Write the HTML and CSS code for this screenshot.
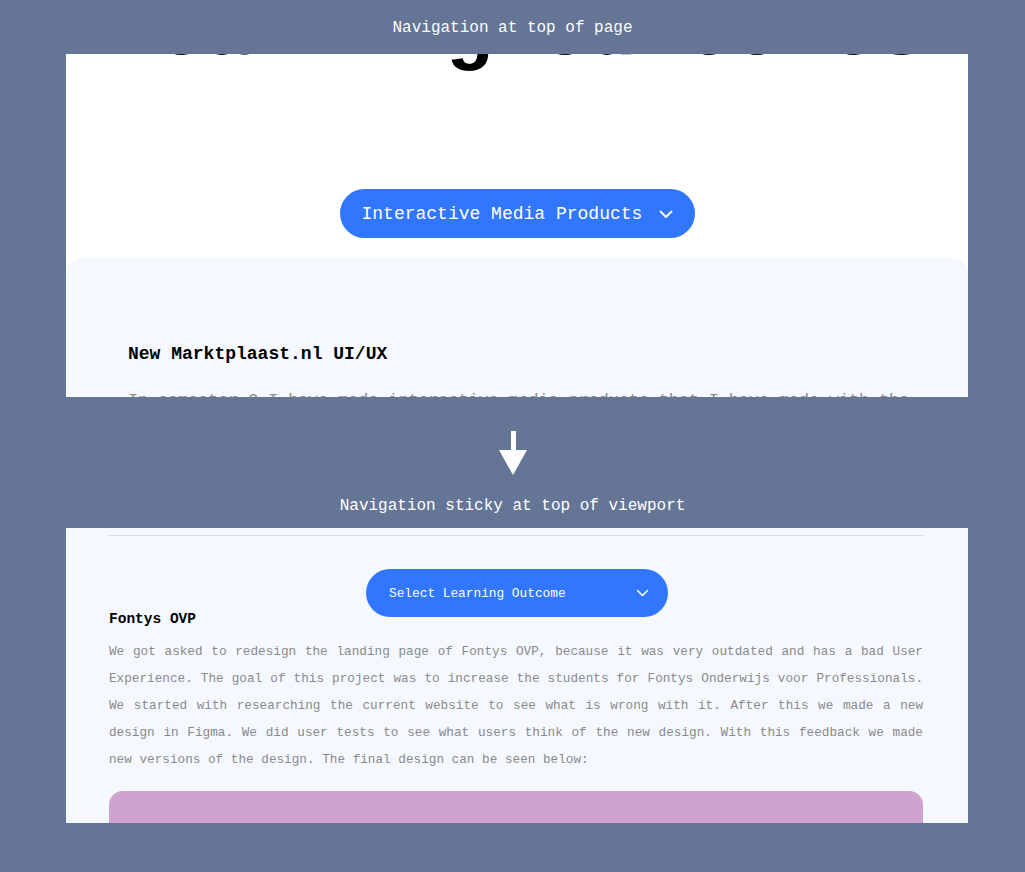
FILE: index.html
```html
<!DOCTYPE html>
<html lang="en">
<head>
<meta charset="utf-8">
<title>Sticky navigation</title>
<link rel="stylesheet" href="styles.css">
</head>
<body>
  <p class="caption caption-top">Navigation at top of page</p>

  <div class="frame frame-top">
    <h1 class="hero-title">Learning Outcomes</h1>
    <button class="pill pill-large" type="button">
      <span>Interactive Media Products</span>
      <svg class="chev" width="14" height="9" viewBox="0 0 14 9"><polyline points="1.5,1.5 7,7 12.5,1.5" fill="none" stroke="#fff" stroke-width="2" stroke-linecap="round" stroke-linejoin="round"/></svg>
    </button>
    <section class="content content-top">
      <h2 class="project-title">New Marktplaast.nl UI/UX</h2>
      <p class="project-text">In semester 2 I have made interactive media products that I have made with the</p>
    </section>
  </div>

  <div class="between">
    <svg class="arrow" width="28" height="44" viewBox="0 0 28 44">
      <rect x="12" y="0" width="5" height="20" fill="#fff"/>
      <polygon points="0,19 28,19 14,44" fill="#fff"/>
    </svg>
    <p class="caption">Navigation sticky at top of viewport</p>
  </div>

  <div class="frame frame-bottom">
    <hr class="rule">
    <button class="pill pill-small" type="button">
      <span>Select Learning Outcome</span>
      <svg class="chev" width="13" height="8" viewBox="0 0 13 8"><polyline points="1.5,1.5 6.5,6.5 11.5,1.5" fill="none" stroke="#fff" stroke-width="1.6" stroke-linecap="round" stroke-linejoin="round"/></svg>
    </button>
    <h2 class="small-title">Fontys OVP</h2>
    <p class="small-text">We got asked to redesign the landing page of Fontys OVP, because it was very outdated and has a bad User Experience. The goal of this project was to increase the students for Fontys Onderwijs voor Professionals. We started with researching the current website to see what is wrong with it. After this we made a new design in Figma. We did user tests to see what users think of the new design. With this feedback we made new versions of the design. The final design can be seen below:</p>
    <div class="design-card"></div>
  </div>
</body>
</html>
```

FILE: styles.css
```css
* { box-sizing: border-box; }

html, body {
  margin: 0;
  padding: 0;
}

body {
  background: #657596;
  font-family: "Liberation Mono", "DejaVu Sans Mono", monospace;
  width: 1025px;
  height: 872px;
  overflow: hidden;
}

.caption {
  margin: 0;
  color: #ffffff;
  font-size: 16px;
  line-height: 24px;
  text-align: center;
}

.caption-top {
  padding: 16px 0 14px;
}

.frame {
  width: 902px;
  margin-left: 66px;
  overflow: hidden;
}

.frame-top {
  height: 343px;
  background: #ffffff;
  display: flex;
  flex-direction: column;
  align-items: center;
}

.frame-top > * { flex: none; }

.hero-title {
  margin: -61px 0 0;
  font-size: 80px;
  line-height: 80px;
  font-weight: 700;
  color: #000;
  white-space: nowrap;
  text-align: center;
}

.pill {
  border: 0;
  background: #3176fe;
  color: #fff;
  font-family: "Liberation Mono", "DejaVu Sans Mono", monospace;
  display: flex;
  align-items: center;
  justify-content: space-between;
  border-radius: 999px;
  cursor: pointer;
}

.pill-large {
  margin-top: 116px;
  width: 355px;
  height: 49px;
  padding: 0 22px 0 22px;
  font-size: 18px;
}

.pill-large .chev { margin-top: 2px; }

.content {
  background: #f5f8fe;
}

.content-top {
  margin-top: 20px;
  width: 100%;
  height: 200px;
  border-radius: 16px 16px 0 0;
  padding: 84px 40px 0 62px;
}

.project-title {
  margin: 0;
  font-size: 18px;
  line-height: 24px;
  font-weight: 700;
  color: #000;
}

.project-text {
  margin: 21px 0 0;
  font-size: 16.7px;
  line-height: 28px;
  color: #8a8a8a;
  white-space: nowrap;
}

.between {
  height: 131px;
  display: flex;
  flex-direction: column;
  align-items: center;
  padding-top: 34px;
}

.arrow {
  display: block;
  margin-bottom: 19px;
}

.frame-bottom {
  position: relative;
  height: 295px;
  background: #f5f8fe;
  padding: 7px 45px 0 43px;
}

.rule {
  margin: 0;
  border: 0;
  border-top: 1px solid #d6dae1;
  height: 0;
}

.pill-small {
  position: absolute;
  top: 41px;
  left: 50%;
  transform: translateX(-50%);
  width: 302px;
  height: 48px;
  padding: 0 19px 0 23px;
  font-size: 12.8px;
}

.small-title {
  margin: 73px 0 0;
  font-size: 14.5px;
  line-height: 20px;
  font-weight: 700;
  color: #000;
}

.small-text {
  margin: 9px 0 0;
  font-size: 12.7px;
  line-height: 27px;
  color: #8a8a8a;
  text-align: justify;
}

.design-card {
  margin-top: 18px;
  height: 120px;
  background: #cea3cf;
  border-radius: 14px;
}
```
